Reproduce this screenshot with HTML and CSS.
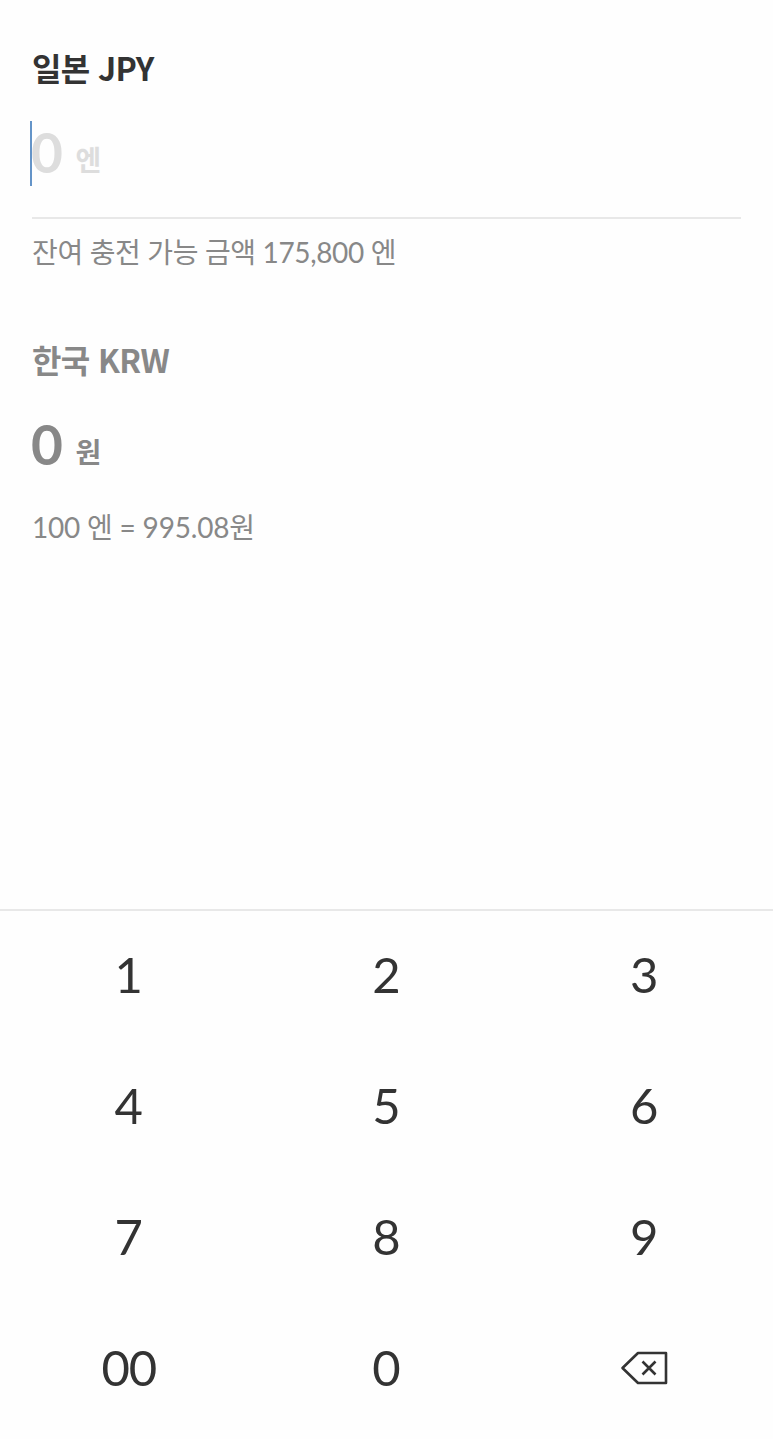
FILE: index.html
```html
<!DOCTYPE html>
<html lang="ko">
<head>
  <meta charset="UTF-8" />
  <meta name="viewport" content="width=device-width, initial-scale=1.0" />
  <title>환전 충전</title>
  <link rel="stylesheet" href="styles.css">
</head>
<body>
  <main class="exchange">
    <section class="foreign">
      <h2>일본 JPY</h2>
      <div class="amount"><span class="number">0</span><span class="unit">엔</span></div>
      <p class="limit">잔여 충전 가능 금액 175,800 엔</p>
    </section>

    <section class="local">
      <h2>한국 KRW</h2>
      <div class="amount"><span class="number">0</span><span class="unit">원</span></div>
      <p class="rate">100 엔 = 995.08원</p>
    </section>
  </main>

  <div class="keypad">
    <button>1</button>
    <button>2</button>
    <button>3</button>
    <button>4</button>
    <button>5</button>
    <button>6</button>
    <button>7</button>
    <button>8</button>
    <button>9</button>
    <button class="double">00</button>
    <button>0</button>
    <button class="delete" aria-label="지우기">
      <svg width="48" height="36" viewBox="0 0 48 36" fill="none" stroke="#333" stroke-width="2.6" stroke-linejoin="round">
        <path d="M18 3H46V33H18L2.5 18Z" />
        <path d="M22.5 11.5L35.5 24.5M35.5 11.5L22.5 24.5" />
      </svg>
    </button>
  </div>
</body>
</html>
```
FILE: styles.css
```css
* {
  box-sizing: border-box;
}
body {
  margin: 0;
  height: 1439px;
  display: flex;
  flex-direction: column;
  background-color: #fefefe;
  color: #333;
  font-family: Lato, "Noto Sans CJK KR", sans-serif;
}
h2, p {
  margin: 0;
}
.exchange {
  height: 909px;
  padding: 43px 32px 0;
}
h2 {
  font-family: "Noto Sans CJK KR", sans-serif;
  font-size: 32px;
  line-height: 48px;
  font-weight: bold;
  letter-spacing: -0.65px;
}
.amount {
  display: flex;
  align-items: baseline;
  gap: 13px;
  height: 64px;
  line-height: 62px;
  font-weight: bold;
}
.number {
  font-size: 55px;
  margin-left: -1px;
  letter-spacing: -0.5px;
}
.unit {
  font-size: 28px;
  position: relative;
  top: -2px;
}
.foreign .amount {
  position: relative;
  margin-top: 30px;
  color: #ddd;
}
/* text cursor */
.foreign .amount::before {
  content: "";
  position: absolute;
  left: -2px;
  top: 0;
  width: 2px;
  height: 65px;
  background-color: #6494c8;
}
.limit {
  margin-top: 32px;
  padding-top: 13px;
  border-top: 2px solid #e8e8e8;
  font-size: 28px;
  line-height: 40px;
  letter-spacing: -0.35px;
  color: #888;
}
.local {
  margin-top: 63px;
  color: #888;
}
.local .amount {
  margin-top: 30px;
}
.rate {
  margin-top: 30px;
  font-size: 28px;
  line-height: 40px;
  letter-spacing: -0.2px;
}
.keypad {
  flex: 1;
  display: grid;
  grid-template-columns: repeat(3, 1fr);
  grid-auto-rows: 131px;
  border-top: 2px solid #e8e8e8;
}
button {
  display: flex;
  align-items: center;
  justify-content: center;
  padding: 0 0 6px;
  border: none;
  background: none;
  color: #333;
  font-family: inherit;
  font-size: 49px;
  cursor: pointer;
}
.double {
  letter-spacing: -1px;
}
.delete {
  padding-bottom: 3px;
}
```
